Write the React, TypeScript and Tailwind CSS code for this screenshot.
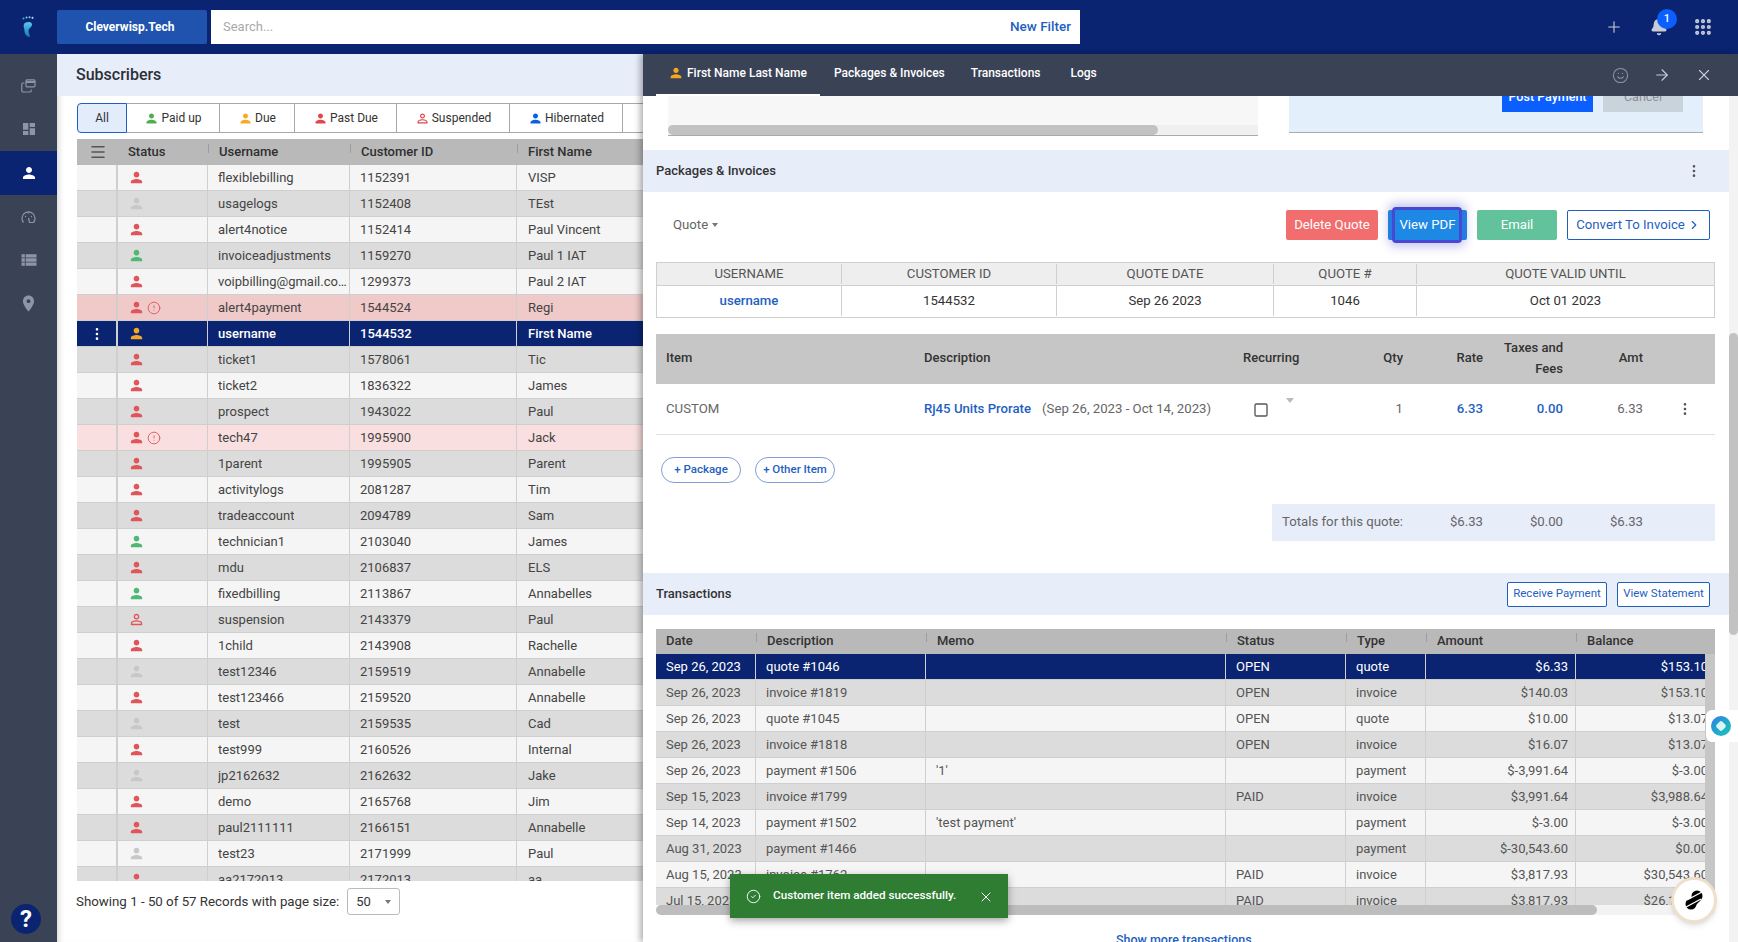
import React from 'react';
import { Plus, Bell, Grip, Smile, ArrowRight, X, EllipsisVertical, Menu, CircleCheck, CircleAlert, ChevronRight, Square } from 'lucide-react';
import { MdPerson, MdPersonOutline, MdDashboard, MdViewList, MdLocationOn } from 'react-icons/md';

const font = "font-['Roboto',sans-serif]";

type Sub = { user: string; id: string; first: string; tone: string; flag?: 'dark' | 'light' | 'sel' };

const subscribers: Sub[] = [
  { user: 'flexiblebilling', id: '1152391', first: 'VISP', tone: 'red' },
  { user: 'usagelogs', id: '1152408', first: 'TEst', tone: 'gray' },
  { user: 'alert4notice', id: '1152414', first: 'Paul Vincent', tone: 'red' },
  { user: 'invoiceadjustments', id: '1159270', first: 'Paul 1 IAT', tone: 'green' },
  { user: 'voipbilling@gmail.com', id: '1299373', first: 'Paul 2 IAT', tone: 'red' },
  { user: 'alert4payment', id: '1544524', first: 'Regi', tone: 'red', flag: 'dark' },
  { user: 'username', id: '1544532', first: 'First Name', tone: 'amber', flag: 'sel' },
  { user: 'ticket1', id: '1578061', first: 'Tic', tone: 'red' },
  { user: 'ticket2', id: '1836322', first: 'James', tone: 'red' },
  { user: 'prospect', id: '1943022', first: 'Paul', tone: 'red' },
  { user: 'tech47', id: '1995900', first: 'Jack', tone: 'red', flag: 'light' },
  { user: '1parent', id: '1995905', first: 'Parent', tone: 'red' },
  { user: 'activitylogs', id: '2081287', first: 'Tim', tone: 'red' },
  { user: 'tradeaccount', id: '2094789', first: 'Sam', tone: 'red' },
  { user: 'technician1', id: '2103040', first: 'James', tone: 'green' },
  { user: 'mdu', id: '2106837', first: 'ELS', tone: 'red' },
  { user: 'fixedbilling', id: '2113867', first: 'Annabelles', tone: 'green' },
  { user: 'suspension', id: '2143379', first: 'Paul', tone: 'outline' },
  { user: '1child', id: '2143908', first: 'Rachelle', tone: 'red' },
  { user: 'test12346', id: '2159519', first: 'Annabelle', tone: 'gray' },
  { user: 'test123466', id: '2159520', first: 'Annabelle', tone: 'red' },
  { user: 'test', id: '2159535', first: 'Cad', tone: 'gray' },
  { user: 'test999', id: '2160526', first: 'Internal', tone: 'red' },
  { user: 'jp2162632', id: '2162632', first: 'Jake', tone: 'gray' },
  { user: 'demo', id: '2165768', first: 'Jim', tone: 'red' },
  { user: 'paul2111111', id: '2166151', first: 'Annabelle', tone: 'red' },
  { user: 'test23', id: '2171999', first: 'Paul', tone: 'gray' },
  { user: 'aa2172013', id: '2172013', first: 'aa', tone: 'red' },
];

const transactions = [
  ['Sep 26, 2023', 'quote #1046', '', 'OPEN', 'quote', '$6.33', '$153.10'],
  ['Sep 26, 2023', 'invoice #1819', '', 'OPEN', 'invoice', '$140.03', '$153.10'],
  ['Sep 26, 2023', 'quote #1045', '', 'OPEN', 'quote', '$10.00', '$13.07'],
  ['Sep 26, 2023', 'invoice #1818', '', 'OPEN', 'invoice', '$16.07', '$13.07'],
  ['Sep 26, 2023', 'payment #1506', "'1'", '', 'payment', '$-3,991.64', '$-3.00'],
  ['Sep 15, 2023', 'invoice #1799', '', 'PAID', 'invoice', '$3,991.64', '$3,988.64'],
  ['Sep 14, 2023', 'payment #1502', "'test payment'", '', 'payment', '$-3.00', '$-3.00'],
  ['Aug 31, 2023', 'payment #1466', '', '', 'payment', '$-30,543.60', '$0.00'],
  ['Aug 15, 2023', 'invoice #1762', '', 'PAID', 'invoice', '$3,817.93', '$30,543.60'],
  ['Jul 15, 2023', 'invoice #1740', '', 'PAID', 'invoice', '$3,817.93', '$26,125.67'],
];

const tabs = [
  { label: 'Paid up', icon: <MdPerson className="text-[#4caf50]" size={15} />, w: 'w-[93px]' },
  { label: 'Due', icon: <MdPerson className="text-[#f9a825]" size={15} />, w: 'w-[75px]' },
  { label: 'Past Due', icon: <MdPerson className="text-[#e0464a]" size={15} />, w: 'w-[102px]' },
  { label: 'Suspended', icon: <MdPersonOutline className="text-[#e0464a]" size={15} />, w: 'w-[113px]' },
  { label: 'Hibernated', icon: <MdPerson className="text-[#0b5fe0]" size={15} />, w: 'w-[113px]' },
];

function StatusIcon({ tone }: { tone: string }) {
  if (tone === 'outline') return <MdPersonOutline size={17} className="text-[#e0555a]" />;
  const color =
    tone === 'red' ? 'text-[#e0555a]' : tone === 'green' ? 'text-[#4fb873]' : tone === 'amber' ? 'text-[#f5a623]' : 'text-[#c8c8c8]';
  return <MdPerson size={17} className={color} />;
}

// tick shown at the start of a sortable header cell
function HeadCell({ label, first }: { label: string; first?: boolean }) {
  return (
    <div className="flex items-center">
      {first ? <span className="w-[10px]" /> : <span className="w-[1px] h-[9px] mr-[10px] -mt-[7px] bg-[#9d9d9d]" />}
      {label}
    </div>
  );
}

function FootLogo() {
  return (
    <svg width="16" height="24" viewBox="0 0 16 24">
      <defs>
        <linearGradient id="foot" x1="0" y1="0" x2="0" y2="1">
          <stop offset="0" stopColor="#5cc6ee" />
          <stop offset="1" stopColor="#1476b8" />
        </linearGradient>
      </defs>
      <path d="M4 9C5 7 11 6 12 9C12.500 12 8.500 13 8.500 16C8.500 18 10 20 10 22C7 22 4.500 19 4.500 16C4.500 13 3 12 4 9z" fill="url(#foot)" />
      <circle cx="3.500" cy="3.500" r="1" fill="#3cb0e0" />
      <circle cx="6.500" cy="2.500" r="1" fill="#7fd2ee" />
      <circle cx="9.500" cy="2.300" r="1" fill="#7fd2ee" />
      <circle cx="12.500" cy="2.800" r="1.100" fill="#a9dcec" />
    </svg>
  );
}

function Sidebar() {
  const cls = 'h-[43.5px] flex items-center justify-center text-[#8e95a5]';
  return (
    <aside className="w-[57px] shrink-0 bg-[#3a4256] pt-[10px] relative">
      <div className={cls}>
        <svg width="15" height="14" viewBox="0 0 15 14" fill="none" stroke="currentColor" strokeWidth="1.200">
          <rect x="5" y="0.800" width="9" height="7" rx="1" />
          <path d="M5 3h9" strokeWidth="2" />
          <path d="M3.500 4H2A1.200 1.200 0 0 0 0.800 5.200v6.600A1.200 1.200 0 0 0 2 13h7a1.200 1.200 0 0 0 1.200-1.200V10.500" />
        </svg>
      </div>
      <div className={cls}><MdDashboard size={16} /></div>
      <div className={`${cls} bg-[#0a2472] text-white`}><MdPerson size={18} /></div>
      <div className={cls}>
        <svg width="15" height="15" viewBox="0 0 15 15" fill="none" stroke="currentColor" strokeWidth="1.200">
          <path d="M2.500 13.500A6.500 6.500 0 1 1 12.500 13.500H8.500L7.500 9" />
          <circle cx="4.500" cy="7.500" r="0.700" fill="currentColor" stroke="none" />
          <circle cx="7.500" cy="4" r="0.700" fill="currentColor" stroke="none" />
          <circle cx="10.500" cy="7.500" r="0.700" fill="currentColor" stroke="none" />
        </svg>
      </div>
      <div className={cls}><MdViewList size={20} /></div>
      <div className={cls}><MdLocationOn size={19} /></div>
      <div className="absolute left-[11px] bottom-[8px] w-[30px] h-[30px] rounded-full bg-[#0a2472] text-white flex items-center justify-center text-[24px] font-bold">?</div>
    </aside>
  );
}

function SubscribersPanel() {
  return (
    <section className="w-[586px] shrink-0 bg-white flex flex-col shadow-[inset_6px_0_6px_-5px_rgba(0,0,0,0.2)] overflow-hidden">
      <div className="h-[42px] shrink-0 bg-[#e8edfa] pl-[19px] flex items-center text-[16px] font-medium text-[#2c2f36]">Subscribers</div>
      <div className="flex h-[30px] mt-[7px] ml-[20px] text-[12px] text-[#333] shrink-0">
        <div className="w-[50px] shrink-0 rounded-l-[4px] border border-[#1f5fbf] bg-[#e3ecfb] flex items-center justify-center">All</div>
        {tabs.map((t) => (
          <div key={t.label} className={`${t.w} shrink-0 border-y border-r border-[#a8a8a8] flex items-center justify-center gap-[2px]`}>
            {t.icon}
            {t.label}
          </div>
        ))}
        <div className="w-[30px] shrink-0 border-y border-[#a8a8a8]" />
      </div>
      <div className="mt-[6px] ml-[20px] h-[742px] shrink-0 overflow-hidden text-[13px]">
        <div className="h-[26px] bg-[#b9b9b9] grid grid-cols-[41px_90px_142px_167px_1fr] items-center font-medium text-[#2f2f2f]">
          <div className="flex justify-center text-[#555]"><Menu size={18} /></div>
          <HeadCell label="Status" first />
          <HeadCell label="Username" />
          <HeadCell label="Customer ID" />
          <HeadCell label="First Name" />
        </div>
        {subscribers.map((s, i) => {
          const bg =
            s.flag === 'sel' ? 'bg-[#0a2472] text-white font-medium' : s.flag === 'dark' ? 'bg-[#f0c9c9] text-[#444]' : s.flag === 'light' ? 'bg-[#f9dfdf] text-[#444]' : i % 2 === 0 ? 'bg-[#f5f5f5] text-[#444]' : 'bg-[#dcdcdc] text-[#444]';
          return (
            <div key={s.id} className={`h-[26px] grid grid-cols-[41px_90px_142px_167px_1fr] items-stretch border-b border-[#cfcfcf] ${bg}`}>
              <div className="flex items-center justify-center border-r-2 border-[#cfcfcf]">
                {s.flag === 'sel' && <EllipsisVertical size={16} />}
              </div>
              <div className="flex items-center pl-[10px] gap-[2px] border-r border-[#cfcfcf]">
                <StatusIcon tone={s.tone} />
                {s.flag && s.flag !== 'sel' && <CircleAlert size={14} strokeWidth={1.500} className="text-[#e0555a]" />}
              </div>
              <div className="flex items-center pl-[10px] border-r border-[#cfcfcf] min-w-0"><span className="truncate">{s.user}</span></div>
              <div className="flex items-center pl-[10px] border-r border-[#cfcfcf]">{s.id}</div>
              <div className="flex items-center pl-[11px]">{s.first}</div>
            </div>
          );
        })}
      </div>
      <div className="ml-[19px] mt-[7px] flex items-center gap-[8px] text-[13.300px] text-[#333]">
        <span>Showing 1 - 50 of 57 Records with page size:</span>
        <div className="w-[53px] h-[27px] border border-[#bbb] rounded-[3px] flex items-center justify-between px-[8px] text-[13px]">
          <span>50</span>
          <span className="border-x-[3px] border-t-[4px] border-x-transparent border-t-[#777]" />
        </div>
      </div>
    </section>
  );
}

function SectionBand({ title, children }: { title: string; children?: React.ReactNode }) {
  return (
    <div className="h-[42px] bg-[#e8edfa] pl-[13px] pr-[19px] flex items-center justify-between text-[13px] font-medium text-[#333]">
      <span>{title}</span>
      {children}
    </div>
  );
}

function QuoteSection() {
  return (
    <div className="pl-[13px] pr-[14px] text-[13.200px]">
      <div className="h-[70px] pt-[18px] flex items-start">
        <div className="ml-[17px] h-[30px] flex items-center gap-[4px] text-[#666]">
          Quote <span className="border-x-[3px] border-t-[4px] border-x-transparent border-t-[#777]" />
        </div>
        <div className="ml-auto mr-[5px] flex gap-[10px] text-white h-[30px]">
          <div className="w-[92px] bg-[#f26d6d] rounded-[2px] flex items-center justify-center">Delete Quote</div>
          <div className="relative w-[79px] bg-[#1e88e5] rounded-[2px] flex items-center justify-center">
            View PDF
            <span className="absolute -top-[3px] -bottom-[3px] left-[4px] right-[5px] rounded-[4px] border-[3px] border-[#4848d0] shadow-[0_0_10px_4px_rgba(72,72,208,0.3)]" />
          </div>
          <div className="w-[80px] bg-[#62c29c] rounded-[2px] flex items-center justify-center">Email</div>
          <div className="w-[143px] bg-white border border-[#1f5fbf] rounded-[2px] flex items-center justify-center gap-[2px] text-[#1f5fbf]">
            Convert To Invoice <ChevronRight size={14} />
          </div>
        </div>
      </div>
      <div className="border border-[#cfcfcf] h-[56px] text-center text-[#555]">
        <div className="h-[23px] bg-[#eeeeee] grid grid-cols-[184px_215px_217px_143px_1fr] items-center border-b border-[#cfcfcf]">
          <div>USERNAME</div>
          <div className="border-l border-[#cfcfcf]">CUSTOMER ID</div>
          <div className="border-l border-[#cfcfcf]">QUOTE DATE</div>
          <div className="border-l border-[#cfcfcf]">QUOTE #</div>
          <div className="border-l border-[#cfcfcf]">QUOTE VALID UNTIL</div>
        </div>
        <div className="h-[31px] pb-[1px] grid grid-cols-[184px_215px_217px_143px_1fr] items-stretch text-[#333]">
          <div className="flex items-center justify-center text-[#1f5fbf] font-medium">username</div>
          <div className="flex items-center justify-center border-l border-[#cfcfcf]">1544532</div>
          <div className="flex items-center justify-center border-l border-[#cfcfcf]">Sep 26 2023</div>
          <div className="flex items-center justify-center border-l border-[#cfcfcf]">1046</div>
          <div className="flex items-center justify-center border-l border-[#cfcfcf]">Oct 01 2023</div>
        </div>
      </div>
      <div className="mt-[16px] h-[50px] pb-[2px] bg-[#c6c6c6] grid grid-cols-[258px_319px_120px_40px_80px_80px_80px_1fr] items-center font-medium text-[#333] pl-[10px] text-[13px]">
        <div>Item</div>
        <div>Description</div>
        <div>Recurring</div>
        <div className="text-right">Qty</div>
        <div className="text-right">Rate</div>
        <div className="text-right leading-[21px]">Taxes and<br />Fees</div>
        <div className="text-right">Amt</div>
      </div>
      <div className="h-[51px] border-b border-[#e0e0e0] grid grid-cols-[258px_319px_120px_40px_80px_80px_80px_1fr] items-center text-[#666] pl-[10px]">
        <div>CUSTOM</div>
        <div className="whitespace-nowrap">
          <span className="text-[#1f5fbf] font-medium">Rj45 Units Prorate</span>
          <span className="ml-[11px]">(Sep 26, 2023 - Oct 14, 2023)</span>
        </div>
        <div className="flex items-start pl-[10px]">
          <Square size={16} className="text-[#555] mt-[2px]" />
          <span className="ml-[17px] -mt-[2px] border-x-[4px] border-t-[5px] border-x-transparent border-t-[#bbb]" />
        </div>
        <div className="text-right">1</div>
        <div className="text-right text-[#1f5fbf] font-medium">6.33</div>
        <div className="text-right text-[#1f5fbf] font-medium">0.00</div>
        <div className="text-right">6.33</div>
        <div className="flex justify-end pr-[22px] text-[#555]"><EllipsisVertical size={16} /></div>
      </div>
      <div className="mt-[22px] ml-[5px] flex gap-[14px] text-[11.500px] font-medium text-[#1f5fbf]">
        <div className="w-[80px] h-[26px] rounded-full border border-[#7f9fd6] flex items-center justify-center">+ Package</div>
        <div className="w-[80px] h-[26px] rounded-full border border-[#7f9fd6] flex items-center justify-center">+ Other Item</div>
      </div>
      <div className="mt-[21px] ml-[616px] h-[37px] pb-[2px] bg-[#e8edfa] flex items-center text-[#666] pl-[10px]">
        <span className="w-[125px]">Totals for this quote:</span>
        <span className="w-[76px] text-right">$6.33</span>
        <span className="w-[80px] text-right">$0.00</span>
        <span className="w-[80px] text-right">$6.33</span>
      </div>
    </div>
  );
}

function TransactionsSection() {
  const cols = 'grid-cols-[100px_170px_300px_120px_80px_150px_139px]';
  return (
    <div className="text-[13px]">
      <SectionBand title="Transactions">
        <div className="flex gap-[10px] text-[11.500px] text-[#1f5fbf] font-normal">
          <div className="w-[100px] h-[25px] bg-white border border-[#1f5fbf] rounded-[2px] flex items-center justify-center">Receive Payment</div>
          <div className="w-[93px] h-[25px] bg-white border border-[#1f5fbf] rounded-[2px] flex items-center justify-center">View Statement</div>
        </div>
      </SectionBand>
      <div className="mt-[14px] ml-[13px] mr-[14px] relative">
        <div className="h-[25px] pb-[2px] bg-[#b9b9b9] flex items-center font-medium text-[#333] overflow-hidden">
          <div className={`grid ${cols} w-[1059px] shrink-0`}>
            <HeadCell label="Date" first />
            <HeadCell label="Description" />
            <HeadCell label="Memo" />
            <HeadCell label="Status" />
            <HeadCell label="Type" />
            <HeadCell label="Amount" />
            <HeadCell label="Balance" />
          </div>
        </div>
        <div className="h-[251px] overflow-hidden pr-[10px] bg-[#c6c6c6]">
          {transactions.map((r, i) => {
            const bg = i === 0 ? 'bg-[#0a2472] text-white' : i % 2 === 1 ? 'bg-[#dcdcdc] text-[#555]' : 'bg-[#f5f5f5] text-[#555]';
            return (
              <div key={r[1]} className={`grid ${cols} h-[26px] w-[1049px] overflow-hidden items-stretch border-b border-[#cfcfcf] ${bg}`}>
                <div className="flex items-center pl-[10px] border-r border-[#cfcfcf]">{r[0]}</div>
                <div className="flex items-center pl-[10px] border-r border-[#cfcfcf]">{r[1]}</div>
                <div className="flex items-center pl-[10px] border-r border-[#cfcfcf]">{r[2]}</div>
                <div className="flex items-center pl-[10px] border-r border-[#cfcfcf]">{r[3]}</div>
                <div className="flex items-center pl-[10px] border-r border-[#cfcfcf]">{r[4]}</div>
                <div className="flex items-center justify-end pr-[7px] border-r border-[#cfcfcf]">{r[5]}</div>
                <div className="flex items-center justify-end pr-[7px]">{r[6]}</div>
              </div>
            );
          })}
        </div>
        <div className="h-[10px] bg-[#f3f3f3] rounded-full">
          <div className="w-[941px] h-[10px] bg-[#bdbdbd] rounded-full" />
        </div>
      </div>
      <div className="mt-[16px] pl-[6px] text-center text-[#1f5fbf] text-[12.500px] font-medium">Show more transactions...</div>
    </div>
  );
}

function DetailPanel() {
  return (
    <section className="flex-1 min-w-0 bg-white flex flex-col overflow-hidden shadow-[-3px_0_6px_rgba(0,0,0,0.3)] z-10">
      <header className="h-[42px] shrink-0 bg-[#3a4256] pl-[13px] pr-[25px] flex items-stretch text-white text-[12px] font-medium">
        <div className="w-[164px] flex items-center pl-[12px] pb-[3px] gap-[3px] border-b-2 border-white whitespace-nowrap">
          <MdPerson size={16} className="text-[#f5a623]" /> First Name Last Name
        </div>
        <div className="ml-[14px] pb-[5px] flex items-center">Packages &amp; Invoices</div>
        <div className="ml-[26px] pb-[5px] flex items-center">Transactions</div>
        <div className="ml-[30px] pb-[5px] flex items-center">Logs</div>
        <div className="ml-auto flex items-center gap-[24px] text-[#c9ccd6]">
          <Smile size={17} strokeWidth={1.500} className="text-[#8e95a5]" />
          <ArrowRight size={18} strokeWidth={1.500} />
          <X size={18} strokeWidth={1.500} />
        </div>
      </header>
      <div className="flex flex-1 min-h-0">
        <div className="flex-1 min-w-0 overflow-hidden">
          <div className="h-[54px] flex items-start pl-[25px] text-[13px]">
            <div className="w-[590px] h-[40px] bg-[#f7f7f7] border-b border-[#aaa] flex flex-col justify-end">
              <div className="h-[10px] bg-[#f0f0f0]">
                <div className="w-[490px] h-[10px] bg-[#c2c2c2] rounded-full" />
              </div>
            </div>
            <div className="ml-[31px] w-[414px] h-[37px] bg-[#e3f0fb] border-b border-[#aaa] flex items-start pl-[213px] gap-[10px] text-[12.500px]">
              <div className="w-[91px] h-[16px] bg-[#0b5fff] text-white font-medium overflow-hidden text-center leading-[14px]"><div className="-mt-[6px]">Post Payment</div></div>
              <div className="w-[80px] h-[16px] bg-[#c9d3dc] text-[#8a8f96] overflow-hidden text-center leading-[14px]"><div className="-mt-[6px]">Cancel</div></div>
            </div>
          </div>
          <SectionBand title="Packages & Invoices">
            <EllipsisVertical size={16} className="text-[#555] mr-[8px]" />
          </SectionBand>
          <QuoteSection />
          <div className="h-[32px]" />
          <TransactionsSection />
        </div>
        <div className="w-[9px] shrink-0 bg-[#f3f3f3] pt-[237px]">
          <div className="h-[302px] bg-[#c2c2c2] rounded-full" />
        </div>
      </div>
    </section>
  );
}

export default function App() {
  return (
    <div className={`${font} w-[1738px] h-[942px] overflow-hidden relative flex flex-col bg-white`}>
      <header className="h-[54px] shrink-0 bg-[#0a2472] flex items-center">
        <div className="w-[57px] flex justify-center pr-[2px]"><FootLogo /></div>
        <div className="w-[150px] h-[34px] rounded-[2px] bg-[#2053ad] text-white text-[12px] font-bold flex items-center justify-center pr-[4px]">Cleverwisp.Tech</div>
        <div className="ml-[4px] w-[869px] h-[34px] bg-white flex items-center justify-between pl-[12px] pr-[9px] text-[13px]">
          <span className="text-[#aaa]">Search...</span>
          <span className="text-[#1f5fbf] font-medium text-[13.500px] pb-[2px]">New Filter</span>
        </div>
        <div className="ml-auto flex items-center gap-[25px] pr-[25px] text-[#c9ccd6]">
          <Plus size={18} strokeWidth={1.500} className="mr-[2px]" />
          <div className="relative">
            <Bell size={18} fill="currentColor" />
            <span className="absolute -top-[9px] left-[7px] w-[20px] h-[20px] rounded-full bg-[#0b5fff] text-white text-[11px] font-medium flex items-center justify-center">1</span>
          </div>
          <Grip size={20} strokeWidth={3} />
        </div>
      </header>
      <main className="flex flex-1 min-h-0">
        <Sidebar />
        <SubscribersPanel />
        <DetailPanel />
      </main>

      <div className="absolute left-[730px] top-[874px] w-[278px] h-[44px] z-20 bg-[#2e7d32] text-white text-[11.700px] font-medium flex items-center pl-[16px] shadow-[0_3px_8px_rgba(0,0,0,0.35)]">
        <CircleCheck size={15} strokeWidth={1.500} />
        <span className="ml-[12px]">Customer item added successfully.</span>
        <X size={16} strokeWidth={1.500} className="ml-[22px] mt-[2px]" />
      </div>
      <div className="absolute left-[1671px] top-[877px] z-20 w-[46px] h-[46px] rounded-full bg-white border-[3px] border-[#eee0cb] flex items-center justify-center shadow-md">
        <svg width="20" height="22" viewBox="0 0 20 22">
          <circle cx="13" cy="7" r="5.500" fill="#000" />
          <circle cx="7" cy="15" r="5.500" fill="#000" />
          <path d="M8 8l6 6" stroke="#000" strokeWidth="7" />
          <path d="M3 11L18 3M2 18L17 10" stroke="#fff" strokeWidth="1.400" />
        </svg>
      </div>
      <div className="absolute left-[1706px] top-[710px] z-20 w-[32px] h-[32px] rounded-l-[6px] bg-white flex items-center pl-[5px]">
        <div className="w-[20px] h-[20px] rounded-full bg-[linear-gradient(135deg,#2f7fe8,#19c9b8)] flex items-center justify-center">
          <span className="w-[8px] h-[8px] rounded-[2px] rotate-45 bg-[#d8f6f2]" />
        </div>
      </div>
    </div>
  );
}
